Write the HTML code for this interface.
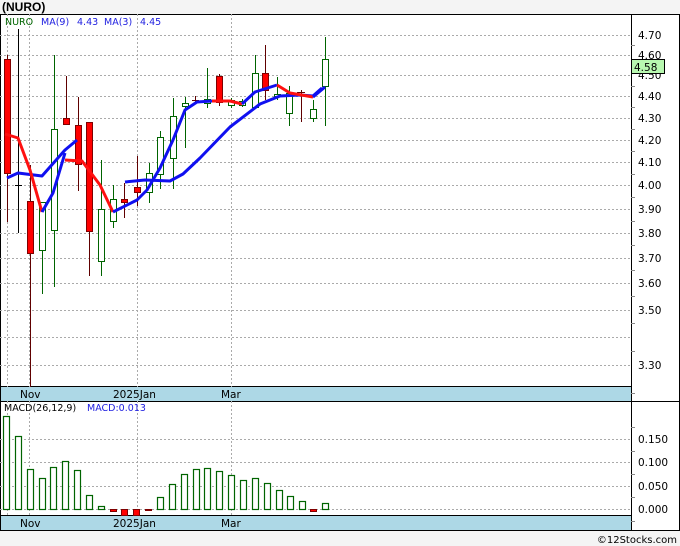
<!DOCTYPE html>
<html><head><meta charset="utf-8"><style>
html,body{margin:0;padding:0;background:#fff;}
svg{display:block;font-family:"DejaVu Sans","Liberation Sans",sans-serif;}
</style></head><body>
<svg width="680" height="546" viewBox="0 0 680 546" xmlns="http://www.w3.org/2000/svg">
<rect x="0" y="0" width="680" height="546" fill="#f4f4f4"/>
<text x="2" y="11" font-size="12" font-weight="bold" fill="#000" font-family="Liberation Sans,sans-serif">(NURO)</text>
<rect x="0" y="14" width="679" height="516" fill="#fff"/>
<rect x="0" y="387" width="631" height="14" fill="#add8e6"/>
<rect x="0" y="516" width="631" height="14" fill="#add8e6"/>
<g stroke="#000" stroke-width="1" fill="none">
<line x1="0" y1="14.5" x2="680" y2="14.5"/>
<line x1="631.5" y1="14" x2="631.5" y2="530"/>
<line x1="679.5" y1="14" x2="679.5" y2="530"/>
<line x1="0.5" y1="14" x2="0.5" y2="530"/>
<line x1="0" y1="386.5" x2="631" y2="386.5"/>
<line x1="0" y1="401.5" x2="680" y2="401.5"/>
<line x1="0" y1="515.5" x2="631" y2="515.5"/>
<line x1="0" y1="530.5" x2="680" y2="530.5"/>
</g>
<g stroke="#aaa" stroke-width="1" stroke-dasharray="2,2">
<line x1="0" y1="35.5" x2="631" y2="35.5"/>
<line x1="0" y1="55.5" x2="631" y2="55.5"/>
<line x1="0" y1="75.5" x2="631" y2="75.5"/>
<line x1="0" y1="96.5" x2="631" y2="96.5"/>
<line x1="0" y1="118.5" x2="631" y2="118.5"/>
<line x1="0" y1="140.5" x2="631" y2="140.5"/>
<line x1="0" y1="162.5" x2="631" y2="162.5"/>
<line x1="0" y1="185.5" x2="631" y2="185.5"/>
<line x1="0" y1="209.5" x2="631" y2="209.5"/>
<line x1="0" y1="233.5" x2="631" y2="233.5"/>
<line x1="0" y1="258.5" x2="631" y2="258.5"/>
<line x1="0" y1="283.5" x2="631" y2="283.5"/>
<line x1="0" y1="310.5" x2="631" y2="310.5"/>
<line x1="0" y1="337.5" x2="631" y2="337.5"/>
<line x1="0" y1="365.5" x2="631" y2="365.5"/>
<line x1="29.5" y1="14" x2="29.5" y2="387"/>
<line x1="137.5" y1="14" x2="137.5" y2="387"/>
<line x1="231.5" y1="14" x2="231.5" y2="387"/>
<line x1="7.5" y1="14" x2="7.5" y2="387"/>
<line x1="0" y1="439.5" x2="631" y2="439.5"/>
<line x1="0" y1="462.5" x2="631" y2="462.5"/>
<line x1="0" y1="486.5" x2="631" y2="486.5"/>
<line x1="0" y1="509.5" x2="631" y2="509.5"/>
<line x1="29.5" y1="401" x2="29.5" y2="516"/>
<line x1="137.5" y1="401" x2="137.5" y2="516"/>
<line x1="231.5" y1="401" x2="231.5" y2="516"/>
<line x1="7.5" y1="401" x2="7.5" y2="516"/>
</g>
<g stroke="#888" stroke-width="1">
<line x1="631" y1="45.5" x2="635" y2="45.5"/><line x1="631" y1="65.5" x2="635" y2="65.5"/>
<line x1="631" y1="86.5" x2="635" y2="86.5"/><line x1="631" y1="107.5" x2="635" y2="107.5"/>
<line x1="631" y1="129.5" x2="635" y2="129.5"/><line x1="631" y1="151.5" x2="635" y2="151.5"/>
<line x1="631" y1="174.5" x2="635" y2="174.5"/><line x1="631" y1="197.5" x2="635" y2="197.5"/>
<line x1="631" y1="221.5" x2="635" y2="221.5"/><line x1="631" y1="245.5" x2="635" y2="245.5"/>
<line x1="631" y1="270.5" x2="635" y2="270.5"/><line x1="631" y1="296.5" x2="635" y2="296.5"/>
<line x1="631" y1="323.5" x2="635" y2="323.5"/><line x1="631" y1="351.5" x2="635" y2="351.5"/>
<line x1="631" y1="393.5" x2="635" y2="393.5"/>
<line x1="631" y1="427.5" x2="635" y2="427.5"/><line x1="631" y1="451.5" x2="635" y2="451.5"/>
<line x1="631" y1="474.5" x2="635" y2="474.5"/><line x1="631" y1="497.5" x2="635" y2="497.5"/>
<line x1="631" y1="521.5" x2="635" y2="521.5"/>
</g>
<g font-size="10.5" fill="#000">
<text x="638" y="39">4.70</text><text x="638" y="59">4.60</text><text x="638" y="79">4.50</text>
<text x="638" y="100">4.40</text><text x="638" y="122">4.30</text><text x="638" y="144">4.20</text>
<text x="638" y="166">4.10</text><text x="638" y="189">4.00</text><text x="638" y="213">3.90</text>
<text x="638" y="237">3.80</text><text x="638" y="262">3.70</text><text x="638" y="287">3.60</text>
<text x="638" y="314">3.50</text><text x="638" y="369">3.30</text>
<text x="638" y="443">0.150</text><text x="638" y="466">0.100</text><text x="638" y="490">0.050</text><text x="638" y="513">0.000</text>
</g>
<rect x="631.5" y="59.5" width="33" height="14" fill="#b8f8b0" stroke="#000"/>
<text x="634" y="71" font-size="10.5" fill="#000">4.58</text>
<g font-size="10.5" fill="#000">
<text x="20" y="398">Nov</text><text x="113" y="398">2025Jan</text><text x="221" y="398">Mar</text>
<text x="20" y="527">Nov</text><text x="113" y="527">2025Jan</text><text x="221" y="527">Mar</text>
</g>
<text x="5" y="25" font-size="9.5" fill="#006400">NURO</text>
<g font-size="9.5" fill="#2020e0">
<text x="41" y="25">MA(9)</text><text x="77" y="25">4.43</text>
<text x="104" y="25">MA(3)</text><text x="140" y="25">4.45</text>
</g>
<text x="4" y="411" font-size="9.5" fill="#000">MACD(26,12,9)</text>
<text x="87" y="411" font-size="9.5" fill="#2020e0">MACD:0.013</text>
<g stroke-width="1">
<g stroke="#600000">
<line x1="7.5" y1="55" x2="7.5" y2="222"/><line x1="30.5" y1="165" x2="30.5" y2="387"/>
<line x1="66.5" y1="76" x2="66.5" y2="124"/><line x1="78.5" y1="97" x2="78.5" y2="191"/>
<line x1="89.5" y1="122" x2="89.5" y2="276"/><line x1="124.5" y1="183" x2="124.5" y2="218"/>
<line x1="137.5" y1="156" x2="137.5" y2="206"/><line x1="195.5" y1="96" x2="195.5" y2="104"/>
<line x1="192" y1="100.5" x2="199" y2="100.5"/><line x1="219.5" y1="74" x2="219.5" y2="106"/>
<line x1="265.5" y1="45" x2="265.5" y2="100"/><line x1="301.5" y1="90" x2="301.5" y2="122"/>
<line x1="297" y1="92.5" x2="305" y2="92.5"/>
</g>
<g stroke="#000"><line x1="18.5" y1="29" x2="18.5" y2="233"/><line x1="15" y1="185.5" x2="22" y2="185.5"/></g>
<g stroke="#006400">
<line x1="42.5" y1="202" x2="42.5" y2="294"/><line x1="54.5" y1="55" x2="54.5" y2="287"/>
<line x1="101.5" y1="160" x2="101.5" y2="276"/><line x1="113.5" y1="185" x2="113.5" y2="228"/>
<line x1="149.5" y1="163" x2="149.5" y2="203"/><line x1="160.5" y1="131" x2="160.5" y2="189"/>
<line x1="173.5" y1="98" x2="173.5" y2="189"/><line x1="185.5" y1="97" x2="185.5" y2="148"/>
<line x1="207.5" y1="68" x2="207.5" y2="108"/><line x1="231.5" y1="98" x2="231.5" y2="108"/>
<line x1="242.5" y1="99" x2="242.5" y2="107"/><line x1="255.5" y1="55" x2="255.5" y2="107"/>
<line x1="277.5" y1="77" x2="277.5" y2="100"/><line x1="289.5" y1="86" x2="289.5" y2="126"/>
<line x1="313.5" y1="100" x2="313.5" y2="122"/><line x1="325.5" y1="37" x2="325.5" y2="126"/>
</g>
</g>
<g fill="#ff0000" stroke="#800000">
<rect x="4.5" y="59.5" width="6" height="114"/><rect x="27.5" y="201.5" width="6" height="52"/>
<rect x="63.5" y="118.5" width="6" height="6"/><rect x="75.5" y="125.5" width="6" height="39"/>
<rect x="86.5" y="122.5" width="6" height="109"/><rect x="121.5" y="199.5" width="6" height="3"/>
<rect x="134.5" y="187.5" width="6" height="5"/><rect x="216.5" y="76.5" width="6" height="26"/>
<rect x="262.5" y="73.5" width="6" height="17"/>
</g>
<g fill="#fff" stroke="#006400">
<rect x="39.5" y="202.5" width="6" height="48"/><rect x="51.5" y="129.5" width="6" height="101"/>
<rect x="98.5" y="209.5" width="6" height="52"/><rect x="110.5" y="199.5" width="6" height="22"/>
<rect x="146.5" y="173.5" width="6" height="19"/><rect x="157.5" y="137.5" width="6" height="37"/>
<rect x="170.5" y="116.5" width="6" height="42"/><rect x="182.5" y="103.5" width="6" height="3"/>
<rect x="204.5" y="99.5" width="6" height="4"/><rect x="228.5" y="100.5" width="6" height="5"/>
<rect x="239.5" y="101.5" width="6" height="4"/><rect x="252.5" y="73.5" width="6" height="34"/>
<rect x="274.5" y="94.5" width="6" height="2"/><rect x="286.5" y="93.5" width="6" height="20"/>
<rect x="310.5" y="109.5" width="6" height="9"/><rect x="322.5" y="59.5" width="6" height="27"/>
</g>
<g fill="none" stroke-width="3" stroke-linejoin="round">
<polyline stroke="#1010f0" points="7,178 18,173 42,176 65,150 77,140"/>
<polyline stroke="#1010f0" points="125,182 145,180 170,181 183,174 200,158 230,127 260,104 280,96 300,95 313,96 322,88"/>
<polyline stroke="#ff1010" points="5,134 18,138 30,170 42,212"/>
<polyline stroke="#1010f0" points="42,212 53,193 65,153"/>
<polyline stroke="#ff1010" points="65,160 82,161 100,185 113,212"/>
<polyline stroke="#1010f0" points="113,212 137,200 147,190 160,168 173,140 185,110 197,102 212,101"/>
<polyline stroke="#ff1010" points="212,101 230,101 242,104"/>
<polyline stroke="#1010f0" points="242,104 255,92 277,85"/>
<polyline stroke="#ff1010" points="277,85 290,93 313,97"/>
<polyline stroke="#1010f0" points="313,97 325,87"/>
</g>
<g fill="#fff" stroke="#006400" stroke-width="1.2">
<rect x="3.5" y="416.5" width="6" height="93"/><rect x="15.5" y="436.5" width="6" height="73"/>
<rect x="27.5" y="469.5" width="6" height="40"/><rect x="39.5" y="478.5" width="6" height="31"/>
<rect x="50.5" y="467.5" width="6" height="42"/><rect x="62.5" y="461.5" width="6" height="48"/>
<rect x="74.5" y="470.5" width="6" height="39"/><rect x="86.5" y="495.5" width="6" height="14"/>
<rect x="98.5" y="506.5" width="6" height="3"/>
<rect x="157.5" y="497.5" width="6" height="12"/><rect x="169.5" y="484.5" width="6" height="25"/>
<rect x="181.5" y="474.5" width="6" height="35"/><rect x="193.5" y="469.5" width="6" height="40"/>
<rect x="204.5" y="468.5" width="6" height="41"/><rect x="216.5" y="471.5" width="6" height="38"/>
<rect x="228.5" y="475.5" width="6" height="34"/><rect x="240.5" y="480.5" width="6" height="29"/>
<rect x="252.5" y="478.5" width="6" height="31"/><rect x="264.5" y="483.5" width="6" height="26"/>
<rect x="276.5" y="490.5" width="6" height="19"/><rect x="287.5" y="496.5" width="6" height="13"/>
<rect x="299.5" y="501.5" width="6" height="8"/><rect x="322.5" y="503.5" width="6" height="6"/>
</g>
<g fill="#ff0000" stroke="#800000">
<rect x="110.5" y="509.5" width="6" height="2"/><rect x="121.5" y="509.5" width="6" height="6"/>
<rect x="133.5" y="509.5" width="6" height="6"/><rect x="145.5" y="509.5" width="6" height="1"/>
<rect x="310.5" y="509.5" width="6" height="2"/>
</g>
<text x="677" y="543" font-size="10" fill="#000" text-anchor="end">©12Stocks.com</text>
</svg>
</body></html>
